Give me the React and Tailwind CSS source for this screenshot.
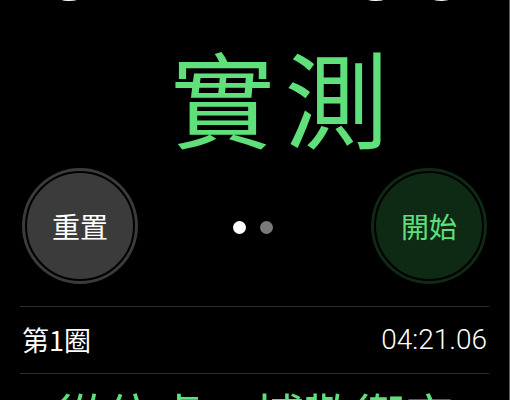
export default function App() {
  const cjk = { fontFamily: '"Noto Sans CJK TC", "Noto Sans CJK SC", sans-serif' };
  const latin = { fontFamily: 'Roboto, "Liberation Sans", sans-serif' };
  return (
    <div className="w-[510px] h-[400px] overflow-hidden bg-black border-r border-[#5a5a5a]">
      <div className="-mt-[97px] text-center text-[115px] leading-none text-white font-light whitespace-nowrap" style={latin}>
        04:21.06
      </div>

      <div className="mt-[26px] flex justify-center pl-[60px] text-[104px] leading-none tracking-[10px] text-[#5fe07b]" style={cjk}>
        實測
      </div>

      <div className="mt-[20px] px-[22px] flex items-center justify-between">
        <button className="w-[116px] h-[116px] shrink-0 rounded-full bg-[#3b3b3b] p-[3px]">
          <div className="w-full h-full rounded-full border-2 border-black flex items-center justify-center text-[28px] text-white" style={cjk}>
            重置
          </div>
        </button>
        <div className="flex items-center gap-[14px] mr-[4px] mt-[2px]">
          <span className="w-[13px] h-[13px] rounded-full bg-white" />
          <span className="w-[13px] h-[13px] rounded-full bg-[#7a7a7a]" />
        </div>
        <button className="w-[116px] h-[116px] shrink-0 rounded-full bg-[#0f2a14] p-[3px]">
          <div className="w-full h-full rounded-full border-2 border-black flex items-center justify-center text-[28px] text-[#5fe07b]" style={cjk}>
            開始
          </div>
        </button>
      </div>

      <div className="mt-[22px] mx-[20px] h-px bg-[#2e2e2e]" />
      <div className="mx-[22px] h-[66px] flex items-center justify-between text-white">
        <span className="text-[27px]" style={cjk}>第1圈</span>
        <span className="text-[28px] font-light" style={latin}>04:21.06</span>
      </div>
      <div className="mx-[20px] h-px bg-[#2e2e2e]" />

      <div className="mt-[15px] flex justify-center text-[50px] leading-none text-[#5fe07b] whitespace-nowrap" style={cjk}>
        從位處，博歡衛定
      </div>
    </div>
  );
}
